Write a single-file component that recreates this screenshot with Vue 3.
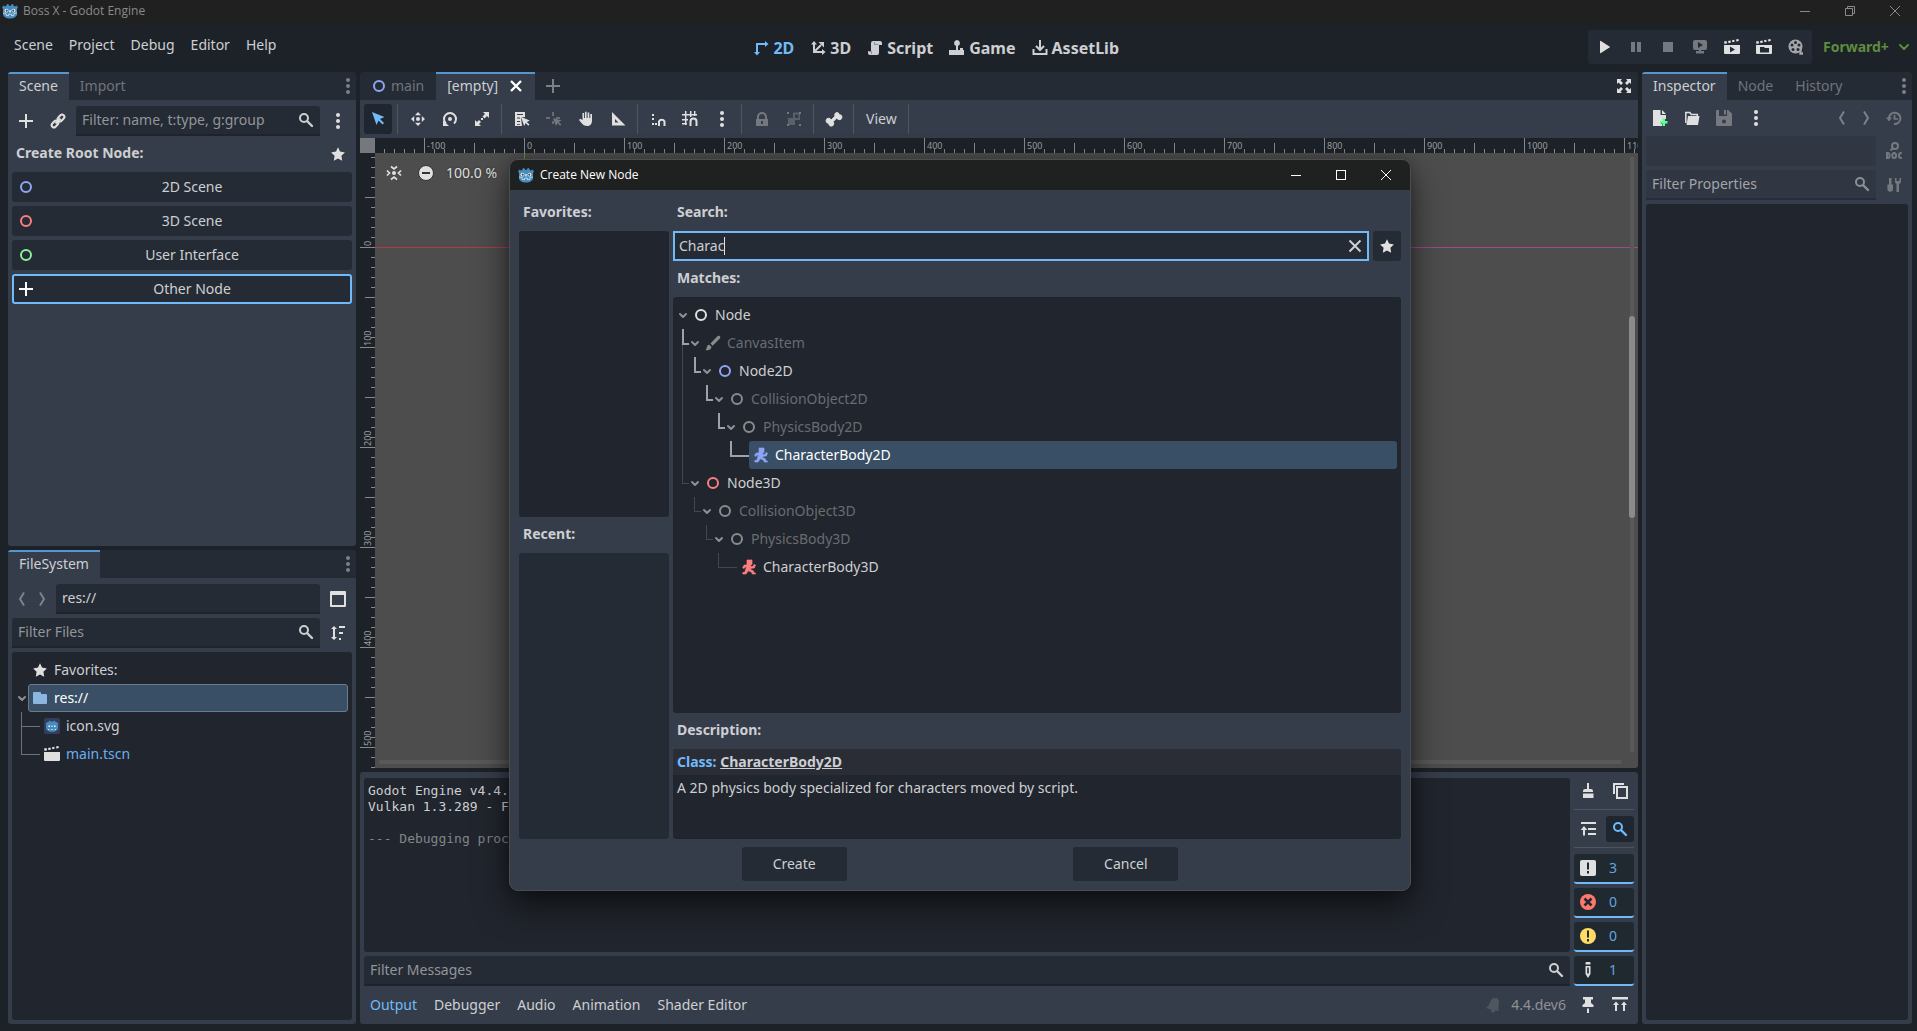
<script setup>
import { h, ref } from 'vue'

const glyphs = {
  add: '<path fill="currentColor" d="M7 1h2v6h6v2H9v6H7V9H1V7h6z"/>',
  close: '<path stroke="currentColor" stroke-width="2.4" d="M3 3l10 10M13 3 3 13"/>',
  clear: '<path stroke="currentColor" stroke-width="2" d="M2.500 2.500l11 11M13.500 2.500l-11 11"/>',
  link: '<g fill="none" stroke="currentColor" stroke-width="2"><rect x="7.200" y="2.700" width="7.600" height="4.600" rx="2.300" transform="rotate(-45 11 5)"/><rect x="1.200" y="8.700" width="7.600" height="4.600" rx="2.300" transform="rotate(-45 5 11)"/><path d="M5.500 10.500l5-5"/></g>',
  search: '<g fill="none" stroke="currentColor" stroke-width="2"><circle cx="6" cy="6" r="4"/><path stroke-width="2.400" stroke-linecap="round" d="M9.500 9.500 14 14"/></g>',
  dots: '<g fill="currentColor"><circle cx="8" cy="2" r="2"/><circle cx="8" cy="8" r="2"/><circle cx="8" cy="14" r="2"/></g>',
  star: '<path fill="currentColor" d="M8 1.300 6 5.600l-4.900.9 3.500 3.300-.8 5L8 12.500l4.200 2.300-.8-5 3.500-3.300-4.900-.9z"/>',
  node: '<circle cx="8" cy="8" r="5" fill="none" stroke="currentColor" stroke-width="2"/>',
  chevron: '<path fill="none" stroke="currentColor" stroke-width="2" stroke-linecap="round" stroke-linejoin="round" d="M5 7l3 3 3-3"/>',
  chevronBig: '<path fill="none" stroke="currentColor" stroke-width="2" stroke-linecap="round" stroke-linejoin="round" d="M4 6l4 4 4-4"/>',
  back: '<path fill="none" stroke="currentColor" stroke-width="2" d="M10 1.500 6 8l4 6.500"/>',
  forward: '<path fill="none" stroke="currentColor" stroke-width="2" d="M6 1.500 10 8l-4 6.500"/>',
  godot: '<path fill="#478cbf" d="M5 1l2 .8.3 1.200h1.400L9 1.800 11 1l.8 2 1 .5 1.700-.9L16 4.400 15 6v5.500C14.500 14 11.500 15.500 8 15.500S1.500 14 1 11.500V6L0 4.400l1.500-1.800 1.700.9 1-.5z"/><path fill="none" stroke="#e8f1f8" stroke-width=".9" d="M1 10l3 .4.200 2 2.300.3v-1.500h3v1.500l2.300-.3.200-2 3-.4" opacity=".8"/><circle cx="4.500" cy="7.600" r="1.900" fill="#fff"/><circle cx="11.500" cy="7.600" r="1.900" fill="#fff"/><circle cx="4.700" cy="7.700" r="1.100" fill="#414042"/><circle cx="11.300" cy="7.700" r="1.100" fill="#414042"/><rect x="7.400" y="7" width="1.200" height="2.600" rx=".6" fill="#fff"/>',
  godotFile: '<rect width="16" height="16" rx="2" fill="#363d5c"/><path fill="#478cbf" d="M5.500 2.500l1.500 1h2l1.500-1 .7 1.300 2.300.7.500 1.500v4.500c-.8 2.500-3 3.300-6 3.300s-5.200-.8-6-3.300V6l.5-1.500 2.300-.7z"/><path fill="#fff" d="M4.500 7.500H6V9H4.500zM10 7.500h1.500V9H10zM7.500 7.500h1V9h-1zM4 11h1.300v.8H4zM7.300 11h1.400v.8H7.300zM10.700 11H12v.8h-1.300z"/>',
  axes2d: '<path fill="none" stroke="currentColor" stroke-width="2" d="M4 13V4h9"/><path fill="currentColor" d="M12 1l3.500 3L12 7zM1 12l3 3.500L7 12z"/>',
  axes3d: '<path fill="none" stroke="currentColor" stroke-width="2" d="M4 3v9h9M4.500 11.500 11 5"/><path fill="currentColor" d="M1 4.500 4 1l3 3.500zM12 9l3.500 3-3.500 3zM8.500 2H14v5.500z"/>',
  script: '<path fill="currentColor" d="M6 1h7a2 2 0 0 1 2 2v2h-3v8a2 2 0 0 1-2 2H3a2 2 0 0 1-2-2v-2h3V3a2 2 0 0 1 2-2z"/><path stroke="#8a8d91" d="M7.500 2v2.500h4M1.500 11.500h3V14" fill="none"/>',
  game: '<path fill="currentColor" d="M8 0a3 3 0 0 1 1 5.800V10h2V8h3v2h1v5H0v-5h7V5.800A3 3 0 0 1 8 0z"/>',
  assetlib: '<path fill="none" stroke="currentColor" stroke-width="2" d="M8 0v9M4 6l4 4 4-4M1.500 9v5h13V9"/>',
  play: '<path fill="currentColor" d="M4 2.500v11a.6.600 0 0 0 .9.500l8.600-5.500a.6.600 0 0 0 0-1L4.900 2A.6.600 0 0 0 4 2.500z"/>',
  pause: '<path fill="currentColor" d="M3 3h4v10H3zM9 3h4v10H9z"/>',
  stop: '<path fill="currentColor" d="M3 3h10v10H3z"/>',
  remote: '<path fill="currentColor" fill-rule="evenodd" d="M3 1h10a2 2 0 0 1 2 2v6a2 2 0 0 1-2 2H9v1h3v2.500H4V12h3v-1H3a2 2 0 0 1-2-2V3a2 2 0 0 1 2-2zm3 2v6l5-3z"/>',
  clapPlay: '<path fill="currentColor" fill-rule="evenodd" d="M0 6h16v8a1 1 0 0 1-1 1H1a1 1 0 0 1-1-1zm6 1.500v6l5-3zM0 2.500l2.500-.4.6 2.200L.6 5zM4 2l2.500-.4.4 2-2.300.6zM8 1.200l2.300-.4.3 2-2.200.5zM12 .6l2.500-.5.300 2-2.400.5z"/>',
  clapFolder: '<path fill="currentColor" fill-rule="evenodd" d="M0 6h16v8a1 1 0 0 1-1 1H1a1 1 0 0 1-1-1zm4 2v5.500h9V9H9L8 8zM0 2.500l2.500-.4.6 2.200L.6 5zM4 2l2.500-.4.4 2-2.300.6zM8 1.200l2.300-.4.3 2-2.200.5zM12 .6l2.500-.5.300 2-2.400.5z"/>',
  scene: '<path fill="currentColor" d="M0 6h16v8a1 1 0 0 1-1 1H1a1 1 0 0 1-1-1zM0 2.500l2.500-.4.6 2.200L.6 5zM4 2l2.500-.4.4 2-2.300.6zM8 1.200l2.300-.4.3 2-2.200.5zM12 .6l2.500-.5.300 2-2.400.5z"/>',
  film: '<circle cx="7.500" cy="7.500" r="7" fill="currentColor"/><path stroke="currentColor" stroke-width="2.400" d="M12.500 10v4.500H15"/><g fill="#252b34"><circle cx="7.500" cy="3.500" r="1.500"/><circle cx="4" cy="6" r="1.500"/><circle cx="11" cy="6" r="1.500"/><circle cx="5" cy="10.500" r="1.500"/><circle cx="10" cy="10.500" r="1.500"/></g>',
  select: '<path fill="currentColor" d="M2 1l4.500 13 2-4.500 4 4 1.500-1.500-4-4L14.500 6z"/>',
  move: '<g fill="currentColor"><circle cx="8" cy="8" r="2"/><path d="M8 1l3 3.200H5zM8 15l-3-3.200h6zM1 8l3.200-3v6zM15 8l-3.200 3V5z"/></g>',
  rotate: '<path fill="none" stroke="currentColor" stroke-width="2" d="M4 12.500A6 6 0 1 1 12 12.500"/><circle cx="8" cy="8" r="2" fill="currentColor"/><path fill="currentColor" d="M1 9.500V15h6z"/>',
  scale: '<path fill="currentColor" d="M9 1h6v6l-2-2-2.500 2.500-2-2L11 3zM1 9v6h6l-2-2 2-2-2-2-2 2zM7 7h2v2H7z"/>',
  list: '<path fill="currentColor" fill-rule="evenodd" d="M1 1h10v5L7 6.500 8 15H1zm2 2v1h6V3zm0 3.500v1h3v-1zM3 10v1h3v-1zM3 13v.8h3V13z"/><path fill="currentColor" d="M7 6l3.200 9 1.500-3 2.600 2.800 1.200-1.200-2.700-2.600 3-1.500z"/>',
  pivot: '<path fill="currentColor" d="M6 1h2v4H6zM0 6h4v2H0zM10 6h4v2h-4zM6 10h2v3H6z" opacity=".8"/><path fill="currentColor" d="M7 7l3 8 1.500-3 2.600 2.800 1.200-1.200-2.700-2.600 3-1.500z"/>',
  hand: '<path fill="currentColor" d="M7 .8h1.600V7h1V1.600h1.700V7h1V3H14v6.500c0 3-1.500 5.500-4.500 5.500S5 14 3.500 12L1 9l1.200-1.200L4.500 9V2h1.600v5H7z"/>',
  ruler: '<path fill="currentColor" fill-rule="evenodd" d="M2 1v13.500h13.500zm3 7v3.500h3.500z"/>',
  snap: '<path fill="currentColor" d="M2 3h2v2H2zM2 7h2v2H2zM2 12h2v2H2zM5 12h2v2H5z"/><path fill="none" stroke="currentColor" stroke-width="2" d="M9 15v-4.500a3 3 0 0 1 5.500 0V15"/>',
  gridSnap: '<path fill="none" stroke="currentColor" stroke-width="1.500" d="M3.700 0v14M8.700 0v6M12.700 0v5M0 3.700h15M0 8.700h6M0 12.700h5"/><path fill="none" stroke="currentColor" stroke-width="2" d="M8.500 15v-4.500a3 3 0 0 1 6 0V15"/>',
  lock: '<path fill="currentColor" fill-rule="evenodd" d="M8 1a5 5 0 0 0-5 5v2H2v7h12V8h-1V6a5 5 0 0 0-5-5zm0 2a3 3 0 0 1 3 3v2H5V6a3 3 0 0 1 3-3zM7 10h2v3H7z"/>',
  group: '<g fill="currentColor"><path d="M1 1h2v2H1zM13 1h2v2h-2zM1 13h2v2H1zM13 13h2v2h-2z"/><path opacity=".6" d="M1 7h6V1.500h7V9H9v5H2V8z M9 3.500v3.500h3.500V3.500z" fill-rule="evenodd"/></g>',
  bone: '<path fill="currentColor" d="M10.500 1.500a2.500 2.500 0 0 0-1.400 3.600L5 9.200a2.500 2.500 0 1 0-2.200 3 2.500 2.500 0 1 0 4.200-1.400L11 6.700a2.500 2.500 0 1 0 2.200-3 2.500 2.500 0 0 0-2.700-2.200z" stroke="currentColor"/>',
  expand: '<path fill="currentColor" d="M1 1h5L4.500 2.500 7 5 5 7 2.500 4.500 1 6zM15 1v5l-1.500-1.500L11 7 9 5l2.500-2.500L10 1zM1 15v-5l1.500 1.500L5 9l2 2-2.500 2.500L6 15zM15 15h-5l1.500-1.500L9 11l2-2 2.500 2.500L15 10z"/>',
  center: '<g fill="currentColor"><circle cx="8" cy="8" r="2"/></g><path fill="none" stroke="currentColor" stroke-width="1.700" d="M5 1.500 8 4l3-2.500M5 14.500 8 12l3 2.500M1 5.500 3.500 8 1 10.500M15 5.500 12.500 8l2.500 2.500"/>',
  minus: '<circle cx="8" cy="8" r="7.500" fill="#e0e0e0" stroke="#333"/><path fill="#333" d="M4 7h8v2H4z"/>',
  window: '<path fill="currentColor" fill-rule="evenodd" d="M0 1a1 1 0 0 1 1-1h14a1 1 0 0 1 1 1v14a1 1 0 0 1-1 1H1a1 1 0 0 1-1-1zm2 3v10h12V4z"/>',
  sort: '<path fill="currentColor" d="M4 1l3 3H5v8h2l-3 3-3-3h2V4H1zM9 1h6v2H9zM9 7h4v2H9zM9 13h2v2H9z"/>',
  folder: '<path fill="currentColor" d="M1 3a1 1 0 0 1 1-1h6a1 1 0 0 1 1 1v1h5a1 1 0 0 1 1 1v8a1 1 0 0 1-1 1H2a1 1 0 0 1-1-1z"/>',
  brush: '<path fill="currentColor" d="M14.800 1.200c-.8-.8-1.800-.6-2.600.2L5.500 8.500 7.700 10.700l6.900-6.900c.8-.8 1-1.800.2-2.600zM4.300 9.700c-2.800-.3-1.800 3.300-3.800 5.300 3.500.7 6-.7 5.900-3.200z"/>',
  character: '<path fill="currentColor" stroke="currentColor" stroke-width=".7" d="M6 1h5v4.500H9.800l-.5 1.800 2.700.2L13 5.500l1.500.7L13.300 9 10 9.200l-.5 1.300 3 1.500.5 2 1.500.2V15h-3.200l-.8-2-3.200-1.200L5 15H1.800v-1.500l2-.3L5.500 8H4L3 9.500 1.600 8.700 3.200 6H6z"/>',
  broom: '<path fill="currentColor" d="M7 0h2v6h2a2 2 0 0 1 2 2v1H3V8a2 2 0 0 1 2-2h2zM3 10.500h10.500V15H9l-6 0z"/>',
  copy: '<path fill="currentColor" fill-rule="evenodd" d="M1 0h11v2H3v9H1zM4 3h12v13H4zm2 2v9h8V5z"/>',
  collapse: '<path fill="currentColor" d="M1 1h15v2H1zM8 7h8v2H8zM8 12h8v2H8zM4 5l3.300 4H5v5.500H3V9H.7z"/>',
  info: '<rect x="0" y="0" width="16" height="16" rx="2" fill="#e0e0e0"/><path fill="#202830" d="M7 2.500h2v7H7zM7 11h2v2.500H7z"/>',
  error: '<circle cx="8" cy="8" r="8" fill="#ff786b"/><path stroke="#202830" stroke-width="2.600" d="M4.500 4.500l7 7M11.500 4.500l-7 7"/>',
  warning: '<circle cx="8" cy="8" r="8" fill="#ffdd65"/><path fill="#202830" d="M7 2.500h2v7H7zM7 11h2v2.500H7z"/>',
  pencil: '<path fill="currentColor" fill-rule="evenodd" d="M6.500 0h3a1 1 0 0 1 1 1v1.500h-5V1a1 1 0 0 1 1-1zm-1 4h5v8L8 16l-2.500-4zm1.700 1.500v6h1.600v-6z"/>',
  bell: '<path fill="currentColor" d="M10 1c2.500 0 4 1.500 4 4l-.7 7 1 2L10 13.500l-.5 2-3.500-.3.500-2.500L1 11l3-3 1.500-4C6.500 2 8 1 10 1z"/>',
  pin: '<path fill="currentColor" d="M3 0h10v2.500h-2V6l2.500 2v2H2.500V8L5 6V2.500H3zM7 11.500h2V16H7z"/>',
  toTop: '<path fill="currentColor" d="M0 0h16v2.500H0zM4 4.500 7 8H5v6H3V8H1zM12 4.500 15 8h-2v6h-2V8H9z"/>',
  fileNew: '<path fill="currentColor" d="M1 0h7.500v5H14v4h-2v2H9v3h1v2H1zM10 0l4 4h-4z"/><path fill="#5fff97" d="M10.500 8.500h2.500v2.500h2.500v2.500H13V16h-2.500v-2.500H8V11h2.500z"/>',
  fileOpen: '<path fill="none" stroke="currentColor" stroke-width="1.500" d="M1.800 13V2.500h4l1.500 2h6V6"/><path fill="currentColor" d="M4 6h11.500l-1.500 9H2.500z"/>',
  save: '<path fill="currentColor" fill-rule="evenodd" d="M0 1a1 1 0 0 1 1-1h2v6h8V0h1l4 3.500V15a1 1 0 0 1-1 1H1a1 1 0 0 1-1-1zm8 8.500a2 2 0 1 0 0 4 2 2 0 0 0 0-4zM8 0h2v4.500H8z"/>',
  history: '<path fill="none" stroke="currentColor" stroke-width="2" d="M3 8.500A5.700 5.700 0 1 1 8 14"/><path fill="currentColor" d="M0 7.500h6L3 11.500z"/><path fill="none" stroke="currentColor" stroke-width="1.700" d="M8.500 5v4H12"/>',
  doc: '<g fill="none" stroke="currentColor" stroke-width="2"><circle cx="9" cy="3" r="3"/><path d="M7 5 4.500 7.500"/><path d="M1 10v5h.8c2.400 0 2.400-5 0-5zM15.800 10h-1c-2.400 0-2.400 5 0 5h1"/><ellipse cx="8.200" cy="12.500" rx="1.900" ry="2.500"/></g>',
  tools: '<path fill="currentColor" d="M3 1h2.500v6.500H7V12a2.800 2.800 0 0 1-5.600 0V7.500H3zM9 1v3.500c0 1.500 1 2 1.500 2.500v8h2.500V7c1-.5 2-1 2-2.500V1h-1.500v3h-3V1z"/>',
  winMin: '<path stroke="currentColor" d="M3 8.500h10"/>',
  winMax: '<rect x="3.500" y="3.500" width="9" height="9" fill="none" stroke="currentColor"/>',
  winRestore: '<path fill="none" stroke="currentColor" d="M3.500 5.500h7v7h-7zM5.500 5V3.500h7v7H11"/>',
  winClose: '<path stroke="currentColor" d="M3 3l10 10M13 3 3 13"/>',
}

const Icon = (props) =>
  h('svg', {
    class: 'icon',
    width: 16,
    height: 16,
    viewBox: '0 0 16 16',
    'aria-hidden': 'true',
    innerHTML: glyphs[props.name],
  })
Icon.props = ['name']

const menus = ['Scene', 'Project', 'Debug', 'Editor', 'Help']
const workspaces = [
  { label: '2D', icon: 'axes2d', active: true },
  { label: '3D', icon: 'axes3d' },
  { label: 'Script', icon: 'script' },
  { label: 'Game', icon: 'game' },
  { label: 'AssetLib', icon: 'assetlib' },
]
const runButtons = [
  { icon: 'play', label: 'Play' },
  { icon: 'pause', label: 'Pause', dim: true },
  { icon: 'stop', label: 'Stop', dim: true },
  { icon: 'remote', label: 'Remote', dim: true },
  { icon: 'clapPlay', label: 'Play scene' },
  { icon: 'clapFolder', label: 'Play custom scene' },
  { icon: 'film', label: 'Movie maker', soft: true },
]
const rootNodes = [
  { label: '2D Scene', icon: 'node', tone: 'blue' },
  { label: '3D Scene', icon: 'node', tone: 'red' },
  { label: 'User Interface', icon: 'node', tone: 'green' },
  { label: 'Other Node', icon: 'add', tone: 'white', focus: true },
]
const canvasTools = [
  [{ icon: 'select', active: true }],
  [{ icon: 'move' }, { icon: 'rotate' }, { icon: 'scale' }],
  [{ icon: 'list' }, { icon: 'pivot', dim: true }, { icon: 'hand' }, { icon: 'ruler' }],
  [{ icon: 'snap' }, { icon: 'gridSnap' }, { icon: 'dots' }],
  [{ icon: 'lock', dim: true }, { icon: 'group', dim: true }],
  [{ icon: 'bone' }],
]

// Each row lists the guide drawn in every indent column before its content.
const files = [
  { label: 'Favorites:', icon: 'star', tone: 'bright', guides: [] },
  { label: 'res://', icon: 'folder', tone: 'folder', guides: [], arrow: true, selected: true },
  { label: 'icon.svg', icon: 'godotFile', guides: ['tee'] },
  { label: 'main.tscn', icon: 'scene', tone: 'bright', guides: ['elbow'], open: true },
]
const matches = [
  { label: 'Node', icon: 'node', tone: 'bright', guides: [], arrow: true },
  { label: 'CanvasItem', icon: 'brush', guides: ['hot rail'], arrow: true, dim: true },
  { label: 'Node2D', icon: 'node', tone: 'blue', guides: ['rail', 'hot'], arrow: true },
  { label: 'CollisionObject2D', icon: 'node', guides: ['rail', '', 'hot'], arrow: true, dim: true },
  { label: 'PhysicsBody2D', icon: 'node', guides: ['rail', '', '', 'hot'], arrow: true, dim: true },
  { label: 'CharacterBody2D', icon: 'character', tone: 'blue', guides: ['rail', '', '', '', 'hot'], selected: true },
  { label: 'Node3D', icon: 'node', tone: 'red', guides: ['elbow'], arrow: true },
  { label: 'CollisionObject3D', icon: 'node', guides: ['', 'elbow'], arrow: true, dim: true },
  { label: 'PhysicsBody3D', icon: 'node', guides: ['', '', 'elbow'], arrow: true, dim: true },
  { label: 'CharacterBody3D', icon: 'character', tone: 'red', guides: ['', '', '', 'elbow'] },
]

const ticks = (from, to, origin) => {
  const out = []
  for (let n = from; n <= to; n++) {
    const size = n % 10 === 0 ? 15 : n % 5 === 0 ? 10 : 4
    out.push({ at: origin + n * 10, size, label: n % 10 === 0 ? String(n * 10) : '' })
  }
  return out
}
const hTicks = ticks(-14, 111, 149)
const vTicks = ticks(-9, 52, 94)

const counters = [
  { icon: 'info', count: 3 },
  { icon: 'error', count: 0 },
  { icon: 'warning', count: 0 },
  { icon: 'pencil', count: 1 },
]
const bottomTabs = ['Output', 'Debugger', 'Audio', 'Animation', 'Shader Editor']
const query = ref('Charac')
</script>

<template>
  <div class="editor">
    <header class="titlebar">
      <Icon name="godot" />
      <span class="title">Boss X - Godot Engine</span>
      <button class="win" aria-label="Minimize"><Icon name="winMin" /></button>
      <button class="win" aria-label="Restore"><Icon name="winRestore" /></button>
      <button class="win" aria-label="Close"><Icon name="winClose" /></button>
    </header>

    <div class="topbar">
      <nav class="menus">
        <button v-for="m in menus" :key="m">{{ m }}</button>
      </nav>
      <nav class="workspaces">
        <button v-for="w in workspaces" :key="w.label" :class="{ active: w.active }">
          <Icon :name="w.icon" />{{ w.label }}
        </button>
      </nav>
      <div class="run">
        <div class="runbar">
          <button v-for="b in runButtons" :key="b.icon" class="tool" :class="{ dim: b.dim, soft: b.soft }" :aria-label="b.label">
            <Icon :name="b.icon" />
          </button>
        </div>
        <div class="renderer">
          <select aria-label="Rendering method"><option>Forward+</option></select>
          <Icon name="chevronBig" />
        </div>
      </div>
    </div>

    <main class="docks">
      <div class="column left">
        <section class="dock">
          <div class="tabs">
            <button class="tab active">Scene</button>
            <button class="tab">Import</button>
            <button class="tab-menu" aria-label="Dock options"><Icon name="dots" /></button>
          </div>
          <div class="panel">
            <div class="row">
              <button class="tool" aria-label="Add node"><Icon name="add" /></button>
              <button class="tool" aria-label="Instantiate scene"><Icon name="link" /></button>
              <div class="field">
                <input type="text" placeholder="Filter: name, t:type, g:group" aria-label="Filter nodes" />
                <Icon name="search" />
              </div>
              <button class="tool" aria-label="Scene options"><Icon name="dots" /></button>
            </div>
            <div class="row heading">
              <b>Create Root Node:</b>
              <button class="tool" aria-label="Favorites"><Icon name="star" /></button>
            </div>
            <button v-for="r in rootNodes" :key="r.label" class="root-node" :class="{ focus: r.focus }">
              <Icon :name="r.icon" :class="r.tone" /><span>{{ r.label }}</span>
            </button>
          </div>
        </section>

        <section class="dock">
          <div class="tabs">
            <button class="tab active">FileSystem</button>
            <button class="tab-menu" aria-label="Dock options"><Icon name="dots" /></button>
          </div>
          <div class="panel">
            <div class="row">
              <div class="arrows">
                <button class="step" aria-label="Back"><Icon name="back" /></button>
                <button class="step" aria-label="Forward"><Icon name="forward" /></button>
              </div>
              <div class="field"><input type="text" value="res://" aria-label="Path" /></div>
              <button class="tool" aria-label="Split mode"><Icon name="window" /></button>
            </div>
            <div class="row">
              <div class="field">
                <input type="text" placeholder="Filter Files" aria-label="Filter files" />
                <Icon name="search" />
              </div>
              <button class="tool" aria-label="Sort files"><Icon name="sort" /></button>
            </div>
            <ul class="tree files">
              <li v-for="f in files" :key="f.label">
                <span v-for="(g, i) in f.guides" :key="i" class="guide" :class="[g, { leaf: !f.arrow && i === f.guides.length - 1 }]"><i></i></span>
                <span v-if="f.arrow" class="arrow"><Icon name="chevron" /></span>
                <span v-else-if="!f.guides.length" class="arrow"></span>
                <span class="item" :class="{ selected: f.selected, open: f.open }">
                  <Icon :name="f.icon" :class="f.tone" />{{ f.label }}
                </span>
              </li>
            </ul>
          </div>
        </section>
      </div>

      <div class="column center">
        <section class="stage">
          <div class="tabs">
            <button class="tab scene"><Icon name="node" class="blue" />main</button>
            <button class="tab scene active">[empty]<Icon name="close" class="white" /></button>
            <button class="tab-add" aria-label="New scene"><Icon name="add" /></button>
            <button class="tab-full" aria-label="Distraction free mode"><Icon name="expand" /></button>
          </div>
          <div class="toolbar">
            <template v-for="(grp, i) in canvasTools" :key="i">
              <button v-for="t in grp" :key="t.icon" class="tool" :class="{ active: t.active, dim: t.dim }" :aria-label="t.icon">
                <Icon :name="t.icon" />
              </button>
              <span class="sep"></span>
            </template>
            <button class="view">View</button>
            <span class="sep"></span>
          </div>
          <div class="canvas">
            <div class="corner"></div>
            <svg class="ruler-h" height="15">
              <g v-for="t in hTicks" :key="t.at">
                <rect :x="t.at" :y="15 - t.size" width="1" :height="t.size" />
                <text v-if="t.label" :x="t.at + 3" y="11">{{ t.label }}</text>
              </g>
            </svg>
            <svg class="ruler-v" width="15">
              <g v-for="t in vTicks" :key="t.at">
                <rect :x="15 - t.size" :y="t.at" :width="t.size" height="1" />
                <text v-if="t.label" :transform="`translate(11 ${t.at - 1}) rotate(-90)`">{{ t.label }}</text>
              </g>
            </svg>
            <div class="viewport">
              <div class="axis-x"></div>
              <div class="axis-y"></div>
              <div class="zoom">
                <Icon name="center" /><Icon name="minus" /><span>100.0 %</span>
              </div>
              <div class="scroll-v"><i></i></div>
              <div class="scroll-h"></div>
            </div>
          </div>
        </section>

        <section class="bottom">
          <div class="output">
            <div class="log-col">
              <pre class="log">Godot Engine v4.4.dev6
Vulkan 1.3.289 - Forward+

<span>--- Debugging process</span></pre>
              <div class="field">
                <input type="text" placeholder="Filter Messages" aria-label="Filter messages" />
                <Icon name="search" />
              </div>
            </div>
            <div class="side">
              <div class="pair">
                <button class="tool" aria-label="Clear output"><Icon name="broom" /></button>
                <button class="tool" aria-label="Copy output"><Icon name="copy" /></button>
              </div>
              <span class="rule"></span>
              <div class="pair">
                <button class="tool" aria-label="Collapse duplicates"><Icon name="collapse" /></button>
                <button class="tool active" aria-label="Focus search"><Icon name="search" /></button>
              </div>
              <span class="rule"></span>
              <button v-for="c in counters" :key="c.icon" class="counter">
                <Icon :name="c.icon" /><span>{{ c.count }}</span>
              </button>
            </div>
          </div>
          <div class="statusbar">
            <button v-for="(t, i) in bottomTabs" :key="t" class="btab" :class="{ active: i === 0 }">{{ t }}</button>
            <span class="status">
              <Icon name="bell" class="bell" />
              <a href="#" class="version">4.4.dev6</a>
              <button class="tool" aria-label="Pin panel"><Icon name="pin" /></button>
              <button class="tool" aria-label="Expand panel"><Icon name="toTop" /></button>
            </span>
          </div>
        </section>
      </div>

      <div class="column right">
        <section class="dock">
          <div class="tabs">
            <button class="tab active">Inspector</button>
            <button class="tab">Node</button>
            <button class="tab">History</button>
            <button class="tab-menu" aria-label="Dock options"><Icon name="dots" /></button>
          </div>
          <div class="panel">
            <div class="row">
              <button class="tool" aria-label="New resource"><Icon name="fileNew" /></button>
              <button class="tool" aria-label="Load resource"><Icon name="fileOpen" /></button>
              <button class="tool dim" aria-label="Save resource"><Icon name="save" /></button>
              <button class="tool" aria-label="Resource options"><Icon name="dots" /></button>
              <button class="step push" aria-label="Previous object"><Icon name="back" /></button>
              <button class="step" aria-label="Next object"><Icon name="forward" /></button>
              <button class="tool dim" aria-label="Object history"><Icon name="history" /></button>
            </div>
            <div class="row">
              <button class="object-path" aria-label="Edited object"></button>
              <button class="tool dim" aria-label="Open documentation"><Icon name="doc" /></button>
            </div>
            <div class="row">
              <div class="field faded">
                <input type="text" placeholder="Filter Properties" aria-label="Filter properties" />
                <Icon name="search" />
              </div>
              <button class="tool dim" aria-label="Property tools"><Icon name="tools" /></button>
            </div>
            <div class="tree"></div>
          </div>
        </section>
      </div>
    </main>

    <div class="dialog" role="dialog" aria-labelledby="dialog-title">
      <header class="dialog-bar">
        <Icon name="godot" />
        <span id="dialog-title" class="title">Create New Node</span>
        <button class="win" aria-label="Minimize"><Icon name="winMin" /></button>
        <button class="win" aria-label="Maximize"><Icon name="winMax" /></button>
        <button class="win" aria-label="Close"><Icon name="winClose" /></button>
      </header>
      <div class="dialog-body">
        <div class="dialog-split">
          <div class="dialog-side">
            <b class="label">Favorites:</b>
            <div class="box tall"></div>
            <b class="label">Recent:</b>
            <div class="box recent"></div>
          </div>
          <div class="dialog-main">
            <label class="label" for="node-search">Search:</label>
            <div class="row">
              <div class="field focused">
                <input id="node-search" v-model="query" type="text" />
                <span class="caret"></span>
                <Icon name="clear" />
              </div>
              <button class="tool filled" aria-label="Favorite"><Icon name="star" /></button>
            </div>
            <b class="label">Matches:</b>
            <ul class="tree matches">
              <li v-for="m in matches" :key="m.label">
                <span v-for="(g, i) in m.guides" :key="i" class="guide" :class="[g, { leaf: !m.arrow && i === m.guides.length - 1 }]"><i></i></span>
                <span v-if="m.arrow" class="arrow"><Icon name="chevron" /></span>
                <span class="item" :class="{ selected: m.selected, dim: m.dim }">
                  <Icon :name="m.icon" :class="m.tone" />{{ m.label }}
                </span>
              </li>
            </ul>
            <b class="label">Description:</b>
            <div class="description">
              <div class="class-line">Class: <a href="#">CharacterBody2D</a></div>
              <p>A 2D physics body specialized for characters moved by script.</p>
            </div>
          </div>
        </div>
        <div class="actions">
          <button class="create">Create</button>
          <button class="cancel">Cancel</button>
        </div>
      </div>
    </div>
  </div>
</template>

<style>
body {
  margin: 0;
  background: #1d2229;
}
</style>

<style scoped>
* {
  box-sizing: border-box;
}
.editor {
  position: relative;
  display: flex;
  flex-direction: column;
  min-height: 100vh;
  background: #1d2229;
  color: #cdcfd2;
  font: 14px/20px 'Noto Sans', sans-serif;
}
button,
input,
select {
  margin: 0;
  padding: 0;
  border: 0;
  background: none;
  color: inherit;
  font: inherit;
  outline: none;
}
.icon {
  display: block;
  flex: none;
  overflow: visible;
}
ul {
  margin: 0;
  padding: 0;
  list-style: none;
}
a {
  color: inherit;
}
.blue { color: #8da5f3; }
.red { color: #fc7f7f; }
.green { color: #8eef97; }
.white { color: #fff; }
.bright { color: #e0e0e0; }
.folder { color: #8ab6e0; }

/* window frame */
.titlebar {
  display: flex;
  align-items: center;
  height: 24px;
  padding: 0 0 2px 2px;
  background: #202020;
  color: #8a8a8a;
  font: 12px/16px 'Open Sans', sans-serif;
}
.title {
  flex: 1;
  padding-left: 5px;
}
.win {
  display: grid;
  place-items: center;
  width: 45px;
}
.topbar {
  display: flex;
  align-items: center;
  justify-content: space-between;
  height: 48px;
  padding: 0 5px 0 6px;
}
.menus {
  display: flex;
  padding-bottom: 6px;
}
.menus button {
  padding: 0 8px;
}
.workspaces {
  display: flex;
  font-size: 16px;
  font-weight: 700;
}
.workspaces button {
  display: flex;
  align-items: center;
  gap: 4px;
  padding: 0 8px;
}
.workspaces .active {
  color: #70bafa;
}
.run {
  display: flex;
  align-items: center;
  padding-bottom: 2px;
}
.runbar {
  display: flex;
  gap: 4px;
  padding: 2px;
  border-radius: 3px;
  background: #252b34;
}
.renderer {
  display: flex;
  align-items: center;
  color: #5d8c3f;
  font-weight: 700;
}
.renderer select {
  appearance: none;
  padding-left: 11px;
  width: 84px;
}
.tool {
  display: grid;
  place-items: center;
  flex: none;
  width: 28px;
  height: 30px;
  border-radius: 3px;
  color: #e0e0e0;
}
.tool.active {
  background: #1f262f;
  color: #70bafa;
}
.tool.dim {
  color: #75797f;
}
.tool.soft {
  color: #a4a6a9;
}
.tool.filled {
  background: #252b34;
}

/* docks */
.docks {
  display: flex;
  flex: 1;
  gap: 4px;
  padding: 0 5px 7px 8px;
}
.column {
  display: flex;
  flex-direction: column;
  gap: 4px;
}
.left {
  width: 348px;
}
.center {
  flex: 1;
  min-width: 0;
}
.right {
  width: 270px;
}
.dock,
.stage {
  display: flex;
  flex: 1;
  flex-direction: column;
  border-radius: 3px;
  overflow: hidden;
}
.tabs {
  display: flex;
  height: 28px;
  background: #252b34;
}
.tab {
  padding: 0 11px 2px;
  border-top: 2px solid transparent;
  color: #6f747c;
}
.tab.active {
  border-top-color: #5797d0;
  background: #363d4a;
  color: #cdcfd2;
}
.tab.scene {
  display: flex;
  align-items: center;
  gap: 4px;
  padding: 0 12px 2px 11px;
}
.tab.scene.active {
  gap: 10px;
  padding: 0 11px 2px;
}
.tab-menu {
  margin-left: auto;
  color: #7d8085;
}
.tab-add {
  padding: 0 10px;
  color: #7d8085;
}
.tab-full {
  margin-left: auto;
  padding: 0 6px;
  color: #e0e0e0;
}
.panel {
  display: flex;
  flex: 1;
  flex-direction: column;
  gap: 4px;
  padding: 6px 4px 4px;
  background: #363d4a;
}
.right .panel {
  padding-top: 4px;
}
.right .panel > .row:first-child {
  height: 28px;
}
.row {
  display: flex;
  align-items: center;
  gap: 4px;
  height: 30px;
}
.row.heading {
  justify-content: space-between;
  height: 28px;
  padding-left: 4px;
}
.heading b {
  padding-bottom: 2px;
}
.field {
  display: flex;
  flex: 1;
  align-items: center;
  min-width: 0;
  height: 30px;
  padding: 0 6px;
  border-bottom: 2px solid #1f242c;
  border-radius: 3px 3px 0 0;
  background: #252b34;
}
.field input {
  flex: 1;
  min-width: 0;
}
.field input::placeholder {
  color: #92959a;
  opacity: 1;
}
.field .icon {
  color: #cdcfd2;
}
.field.faded {
  border-color: #272d38;
  background: #303642;
}
.field.faded input::placeholder {
  color: #a2a5aa;
}
.field.faded .icon {
  color: #8c8f94;
}
.object-path {
  flex: 1;
  height: 30px;
  border-radius: 3px;
  background: #303642;
}
.arrows {
  display: flex;
}
.step {
  display: grid;
  place-items: center;
  width: 20px;
  height: 28px;
  color: #7d828a;
}
.push {
  margin-left: auto;
}
.root-node {
  display: flex;
  align-items: center;
  height: 30px;
  padding: 0 6px;
  border-radius: 3px;
  background: #252b34;
}
.root-node span {
  flex: 1;
  padding-left: 4px;
}
.root-node.focus {
  padding: 0 4px;
  border: 2px solid #70bafa;
}

/* trees */
.tree {
  flex: 1;
  padding: 4px;
  border-radius: 3px;
  background: #21252d;
}
.tree li {
  display: flex;
  height: 28px;
}
.arrow {
  display: flex;
  align-items: center;
  justify-content: center;
  flex: none;
  width: 12px;
  color: #8d9095;
}
.item {
  display: flex;
  flex: 1;
  align-items: center;
  gap: 6px;
  padding-left: 4px;
  border-radius: 3px;
}
.item.dim {
  color: #696c72;
}
.item.dim .icon {
  color: #8a8b8d;
}
.item.selected {
  background: #384f66;
  color: #fff;
}
.files .item.selected {
  border: 1px solid #6b7a89;
  padding-left: 3px;
}
.files .item.open {
  color: #6aaef0;
}
.guide {
  flex: none;
  width: 12px;
  padding-left: 5px;
}
.guide.leaf {
  width: 24px;
}
.guide i {
  display: block;
}
.elbow i,
.tee i {
  height: 15px;
  border-bottom: 1px solid #43474f;
  border-left: 1px solid #43474f;
}
.files .elbow i,
.files .tee i {
  border-color: #6f7378;
}
.tee {
  background: linear-gradient(#6f7378, #6f7378) 5px 0 / 1px 100% no-repeat;
}
.rail {
  background: linear-gradient(#43474f, #43474f) 5px 0 / 1px 100% no-repeat;
}
.hot i {
  height: 16px;
  border-bottom: 2px solid #a0a2a5;
  border-left: 2px solid #a0a2a5;
}

/* canvas */
.toolbar {
  display: flex;
  align-items: center;
  gap: 4px;
  height: 38px;
  padding: 0 4px;
  background: #363d4a;
}
.sep {
  width: 4px;
  height: 30px;
  background: linear-gradient(#4f5560, #4f5560) 1px 0 / 1px 100% no-repeat;
}
.view {
  padding: 0 6px;
}
.canvas {
  display: grid;
  flex: 1;
  grid-template: 15px 1fr / 15px 1fr;
}
.corner {
  background: #75787c;
}
.ruler-h {
  display: block;
  width: 100%;
}
.ruler-v {
  display: block;
  height: 100%;
}
.ruler-h rect,
.ruler-v rect {
  fill: #85888c;
}
.ruler-h text,
.ruler-v text {
  fill: #9c9ea1;
  font: 9px 'Noto Sans', sans-serif;
}
.viewport {
  position: relative;
  background: #4d4d4d;
}
.axis-x {
  position: absolute;
  top: 94px;
  right: 0;
  left: 0;
  height: 1px;
  background: linear-gradient(90deg, #b23a50 50%, #a5478f 50%);
}
.axis-y {
  position: absolute;
  top: 0;
  bottom: 0;
  left: 149px;
  width: 1px;
  background: #6f8f2c;
}
.zoom {
  display: flex;
  align-items: center;
  gap: 16px;
  padding: 10px 11px;
  color: #e0e0e0;
}
.zoom span {
  margin-left: -4px;
  text-shadow: 0 0 2px #222;
}
.scroll-v {
  position: absolute;
  top: 4px;
  right: 3px;
  bottom: 16px;
  width: 6px;
  background: linear-gradient(#595959, #595959) 1px 0 / 4px 100% no-repeat;
}
.scroll-v i {
  display: block;
  height: 34%;
  margin-top: 159px;
  border-radius: 3px;
  background: #8b8b8b;
}
.scroll-h {
  position: absolute;
  right: 16px;
  bottom: 4px;
  left: 4px;
  height: 4px;
  border-radius: 2px;
  background: #595959;
}

/* output panel */
.bottom {
  border-radius: 3px;
  background: #363d4a;
}
.output {
  display: flex;
  gap: 4px;
  padding: 6px 4px 0;
}
.log-col {
  display: flex;
  flex: 1;
  flex-direction: column;
  gap: 4px;
  min-width: 0;
}
.log-col .field {
  flex: none;
}
.log {
  flex: 1;
  margin: 0;
  padding: 5px 4px;
  border-radius: 3px;
  background: #21252d;
  font: 13px/16px 'DejaVu Sans Mono', monospace;
}
.log span {
  color: #828589;
}
.side {
  display: flex;
  flex-direction: column;
  gap: 4px;
}
.side .tool {
  height: 26px;
}
.pair {
  display: flex;
  gap: 4px;
}
.rule {
  height: 4px;
  background: linear-gradient(#4f5560, #4f5560) 0 1px / 100% 1px no-repeat;
}
.counter {
  display: flex;
  align-items: center;
  height: 30px;
  padding: 0 6px;
  border-bottom: 2px solid #70bafa;
  border-radius: 3px;
  background: #202830;
  color: #e0e0e0;
}
.counter span {
  width: 32px;
  padding-left: 2px;
  color: #63a5de;
  text-align: center;
}
.statusbar {
  display: flex;
  align-items: center;
  gap: 1px;
  height: 38px;
  padding: 0 4px 0 2px;
}
.btab {
  padding: 0 8px;
}
.btab.active {
  color: #70bafa;
}
.status {
  display: flex;
  align-items: center;
  gap: 4px;
  margin-left: auto;
}
.bell {
  color: #50565f;
}
.version {
  padding: 0 4px 0 6px;
  color: #8e9197;
  text-decoration: none;
}

/* create node window */
.dialog {
  position: absolute;
  top: 159px;
  left: 509px;
  width: 902px;
  border: 1px solid #4c4d4e;
  border-radius: 9px;
  background: #363d4a;
  box-shadow: 0 14px 34px rgba(0, 0, 0, 0.6), 0 0 10px rgba(0, 0, 0, 0.2);
  overflow: hidden;
}
.dialog-bar {
  display: flex;
  align-items: center;
  height: 30px;
  padding: 0 2px 0 8px;
  background: #1f2121;
  color: #fff;
  font: 12px/16px 'Open Sans', sans-serif;
}
.dialog-bar .title {
  padding-left: 6px;
}
.dialog-body {
  padding: 9px;
}
.dialog-split {
  display: flex;
  gap: 4px;
}
.dialog-side,
.dialog-main {
  display: flex;
  flex-direction: column;
  gap: 4px;
}
.dialog-side {
  width: 150px;
}
.dialog-main {
  flex: 1;
}
.label {
  height: 28px;
  padding: 3px 4px;
  font-weight: 700;
}
.box {
  border-radius: 3px;
  background: #21252d;
}
.tall {
  height: 286px;
}
.recent {
  flex: 1;
  background: #252b34;
}
.field.focused {
  position: relative;
  padding: 0 4px;
  border: 2px solid #70bafa;
  border-radius: 0;
}
.caret {
  position: absolute;
  top: 4px;
  left: 49px;
  width: 1px;
  height: 18px;
  background: #e0e0e0;
}
.matches {
  flex: none;
  height: 416px;
}
.description {
  height: 90px;
  border-radius: 3px;
  background: #21252d;
  overflow: hidden;
}
.class-line {
  height: 26px;
  padding: 3px 4px;
  background: #2a2d36;
  color: #70bafa;
  font-weight: 700;
}
.class-line a {
  color: #cdcfd2;
}
.description p {
  margin: 3px 4px;
}
.actions {
  display: grid;
  grid-template-columns: 1fr 105px 1fr 105px 1fr;
  gap: 4px;
  margin-top: 8px;
}
.actions button {
  height: 34px;
  border-radius: 3px;
  background: #252b34;
}
.create {
  grid-column: 2;
}
.cancel {
  grid-column: 4;
}
</style>
